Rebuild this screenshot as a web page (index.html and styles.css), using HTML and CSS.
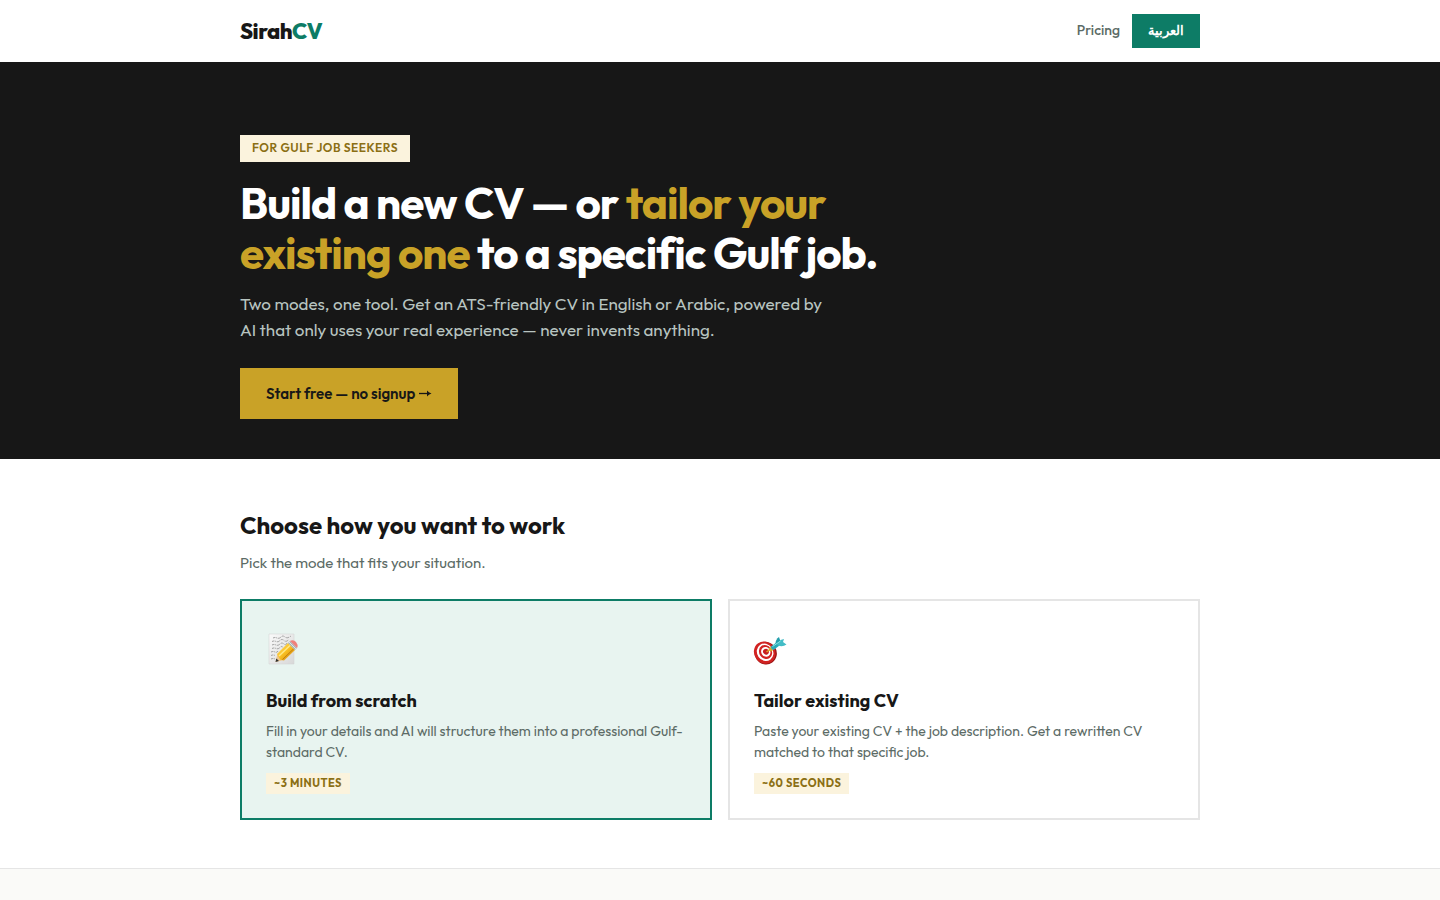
FILE: index.html
```html
<!DOCTYPE html>
<html lang="en">
<head>
<meta charset="UTF-8">
<meta name="viewport" content="width=device-width, initial-scale=1.0">
<title>SirahCV</title>
<link rel="stylesheet" href="styles.css">
</head>
<body>

<header>
  <div class="container nav">
    <a href="#" class="logo">Sirah<span>CV</span></a>
    <nav class="nav-links">
      <a href="#pricing">Pricing</a>
      <button type="button" class="lang-btn">العربية</button>
    </nav>
  </div>
</header>

<section class="hero">
  <div class="container">
    <span class="tag">For Gulf job seekers</span>
    <h1>Build a new CV — or <em>tailor your existing one</em> to a specific Gulf job.</h1>
    <p>Two modes, one tool. Get an ATS-friendly CV in English or Arabic, powered by AI that only uses your real experience — never invents anything.</p>
    <button type="button" class="cta">Start free — no signup
      <svg width="14" height="10" viewBox="0 0 14 10" aria-hidden="true"><path d="M1 4.500h9" stroke="currentColor" stroke-width="1.300"/><path d="M9 1.500q1.500 2 4.500 3-3 1-4.500 3z" fill="currentColor"/></svg>
    </button>
  </div>
</section>

<section class="modes">
  <div class="container">
    <h2>Choose how you want to work</h2>
    <p class="sub">Pick the mode that fits your situation.</p>
    <div class="mode-grid">

      <a href="#build" class="mode-card active">
        <svg class="mode-icon" viewBox="0 0 32 32" aria-hidden="true">
          <defs>
            <linearGradient id="paper" x1="0" y1="0" x2="1" y2="1">
              <stop offset="0" stop-color="#fafafa"/>
              <stop offset="1" stop-color="#d8d8d8"/>
            </linearGradient>
            <linearGradient id="pencil" x1="0" y1="0" x2="1" y2="1">
              <stop offset="0" stop-color="#ffe16a"/>
              <stop offset=".5" stop-color="#f8be22"/>
              <stop offset="1" stop-color="#c87a08"/>
            </linearGradient>
          </defs>
          <path d="M3 1h25v30H3z" fill="url(#paper)" stroke="#d0d3d1" stroke-width=".5"/>
          <g fill="none" stroke="#808080" stroke-width=".7" stroke-dasharray="2.4 .7 1.2 .8 3 1">
            <path d="M7 5q2-1 4 0t4-1 4 0 6-1"/>
            <path d="M6 8.500q2-1 4 0t4-1 4 0 5-1"/>
            <path d="M6 12q2-1 4 0t4-1 4 0 3-1"/>
            <path d="M6 15.500q2-1 4 0t4-1 3 0"/>
            <path d="M5 19q2-1 4 0t3-1"/>
            <path d="M5 22.500q2-1 4 0"/>
            <path d="M5 26q2-1 4 0"/>
          </g>
          <!-- pencil -->
          <path d="m9.500 29 2-8.500 6.500 6.500z" fill="#edc78f"/>
          <path d="M11 21 22 10l7 7-11 10.500-4-1z" fill="url(#pencil)"/>
          <path d="m13 23 11-10.500" stroke="#ffe986" stroke-width="1.500"/>
          <path d="m16.500 26.500 11-10.500" stroke="#b56d0b" stroke-width=".8"/>
          <path d="m22 10 2-2 7 7-2 2z" fill="#a9b3b5"/>
          <path d="m23 9 7 7" stroke="#edf0f0" stroke-width=".8"/>
          <path d="m24 8 1-.5q3-1 5 1.500t1.500 5l-.5 1z" fill="#ef817b"/>
          <path d="m9.500 29 .8-3.500 2.700 2.500z" fill="#303030"/>
        </svg>
        <h3>Build from scratch</h3>
        <p>Fill in your details and AI will structure them into a professional Gulf-standard CV.</p>
        <span class="time">~3 minutes</span>
      </a>

      <a href="#tailor" class="mode-card">
        <svg class="mode-icon" viewBox="0 0 32 32" aria-hidden="true">
          <g transform="rotate(-35 11 20)">
            <ellipse cx="11.500" cy="20.500" rx="11" ry="11.500" fill="#981414"/>
            <ellipse cx="11" cy="19.500" rx="10.500" ry="11.500" fill="#d12322"/>
            <ellipse cx="11.500" cy="19.500" rx="8" ry="9" fill="#fff"/>
            <ellipse cx="12" cy="19.500" rx="6.300" ry="7.200" fill="#d12322"/>
            <ellipse cx="12.300" cy="19.500" rx="4.500" ry="5" fill="#fff"/>
            <ellipse cx="12.500" cy="19.500" rx="2.800" ry="3" fill="#c71e20"/>
          </g>
          <!-- dart -->
          <path d="m12.500 19 4-3" stroke="#d9a629" stroke-width="1.500"/>
          <path d="m15 15 2-1 2 3-1.500 1.500q-3 .2-2.500-3.500z" fill="#d7a72c"/>
          <path d="m17 13.500 6-4.500 2.500 3.500-6 4.500q-2.500-.5-2.500-3.500z" fill="#28aab8"/>
          <path d="M21.500 10.500q0-4 3.500-6.500l1.500 4.500-3 3z" fill="#249eac"/>
          <path d="m23 11 3.500-4 3.500-1-1 3 3.500 2.500q-4 3-8.500 1z" fill="#43bcc6"/>
          <path d="m18.500 13.500 8-5.500" stroke="#8be4e3" stroke-width="1"/>
        </svg>
        <h3>Tailor existing CV</h3>
        <p>Paste your existing CV + the job description. Get a rewritten CV matched to that specific job.</p>
        <span class="time">~60 seconds</span>
      </a>

    </div>
  </div>
</section>

<section class="pricing" id="pricing"></section>

</body>
</html>
```
FILE: styles.css
```css
* {
  box-sizing: border-box;
  margin: 0;
  padding: 0;
}

body {
  font-family: Outfit, sans-serif;
  background: #ffffff;
  color: #171717;
  min-height: 100vh;
  display: flex;
  flex-direction: column;
}

a {
  color: inherit;
  text-decoration: none;
}

button {
  font-family: inherit;
  border: none;
  cursor: pointer;
}

.container {
  width: 100%;
  max-width: 1000px;
  margin: 0 auto;
  padding: 0 20px;
}

/* Header */
.nav {
  display: flex;
  justify-content: space-between;
  align-items: center;
  padding-top: 14px;
  padding-bottom: 14px;
}

.logo {
  font-size: 22px;
  line-height: 34px;
  font-weight: 800;
  letter-spacing: -0.5px;
}

.logo span {
  color: #0d7c66;
}

.nav-links {
  display: flex;
  align-items: center;
  gap: 12px;
  font-size: 14px;
  font-weight: 500;
  color: #5c6b66;
}

.nav-links a {
  padding-bottom: 2px;
}

.lang-btn {
  background: #0d7c66;
  color: #ffffff;
  font-size: 13px;
  font-weight: 600;
  line-height: 18px;
  padding: 7px 16px 9px;
}

/* Hero */
.hero {
  background: #171717;
  color: #ffffff;
  padding: 73px 0 40px;
}

.tag {
  display: block;
  width: fit-content;
  background: #fbf3dd;
  color: #8b6f14;
  font-size: 12px;
  font-weight: 600;
  line-height: 15px;
  letter-spacing: 0.5px;
  text-transform: uppercase;
  padding: 5px 12px 7px;
  margin-bottom: 16px;
}

h1 {
  font-size: 44px;
  line-height: 50px;
  font-weight: 700;
  letter-spacing: -1px;
  max-width: 680px;
  margin-bottom: 13px;
}

h1 em {
  font-style: normal;
  color: #c9a227;
}

.hero p {
  font-size: 17px;
  line-height: 26px;
  color: #b8c4c0;
  max-width: 600px;
  margin-bottom: 25px;
}

.cta {
  background: #c9a227;
  color: #171717;
  font-size: 15px;
  font-weight: 600;
  line-height: 19px;
  padding: 16px 26px;
}

/* Mode picker */
.modes {
  padding: 48px 0;
}

h2 {
  font-size: 24px;
  line-height: 36px;
  font-weight: 700;
  margin-bottom: 8px;
}

.sub {
  font-size: 15px;
  line-height: 24px;
  color: #5c6b66;
  margin-bottom: 24px;
}

.mode-grid {
  display: grid;
  grid-template-columns: 1fr 1fr;
  gap: 16px;
}

.mode-card {
  border: 2px solid #e5e5e5;
  padding: 32px 24px 24px;
}

.mode-card.active {
  border-color: #0d7c66;
  background: #e8f4f0;
}

.mode-icon {
  display: block;
  width: 32px;
  height: 32px;
  overflow: visible;
  margin-bottom: 21px;
}

h3 {
  font-size: 18px;
  line-height: 30px;
  font-weight: 700;
  margin-bottom: 5px;
}

.mode-card p {
  font-size: 14px;
  line-height: 21px;
  color: #5c6b66;
  margin-bottom: 10px;
}

.time {
  display: block;
  width: fit-content;
  background: #fbf3dd;
  color: #8b6f14;
  font-size: 11px;
  font-weight: 700;
  line-height: 15px;
  letter-spacing: 0.5px;
  text-transform: uppercase;
  padding: 3px 8px;
}

.pricing {
  flex: 1;
  background: #fafaf8;
  border-top: 1px solid #e5e5e5;
}

@media (max-width: 640px) {
  .mode-grid {
    grid-template-columns: 1fr;
  }

  h1 {
    font-size: 32px;
    line-height: 38px;
  }
}
```
